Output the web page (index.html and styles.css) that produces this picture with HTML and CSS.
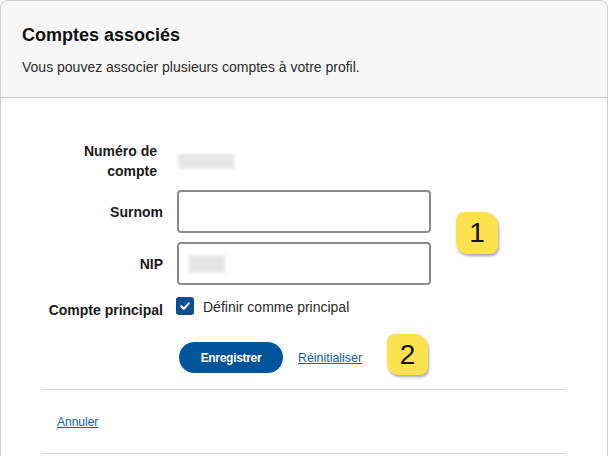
FILE: index.html
```html
<!DOCTYPE html>
<html lang="fr">
<head>
<meta charset="utf-8">
<title>Comptes associés</title>
<link rel="stylesheet" href="styles.css">
</head>
<body>
<div class="card">
  <div class="card-header">
    <h1 class="title">Comptes associés</h1>
    <p class="subtitle">Vous pouvez associer plusieurs comptes à votre profil.</p>
  </div>
  <div class="card-body">
    <div class="form">
      <div class="label label-two">Numéro de<br>compte</div>
      <div class="value"><span class="blur blur-num"></span></div>

      <div class="label label-mid">Surnom</div>
      <div class="field"><div class="input"></div></div>

      <div class="label label-mid">NIP</div>
      <div class="field"><div class="input"><span class="blur blur-nip"></span></div></div>

      <div class="label label-check">Compte principal</div>
      <div class="check-row">
        <span class="checkbox">
          <svg width="12" height="12" viewBox="0 0 12 12"><path d="M2.2 6.3 L4.8 8.8 L9.8 3.4" fill="none" stroke="#fff" stroke-width="2" stroke-linecap="round" stroke-linejoin="round"/></svg>
        </span>
        <span class="check-text">Définir comme principal</span>
      </div>

      <div class="actions">
        <button class="btn-primary" type="button">Enregistrer</button>
        <a class="link link-reset" href="#">Réinitialiser</a>
      </div>
    </div>
    <hr class="rule">
    <div class="footer"><a class="link" href="#">Annuler</a></div>
    <hr class="rule">
    <span class="badge badge-1">1</span>
    <span class="badge badge-2">2</span>
  </div>
</div>
</body>
</html>
```
FILE: styles.css
```css
* { box-sizing: border-box; }
html, body { margin: 0; padding: 0; background: #fff; }
body {
  font-family: "Liberation Sans", Arial, sans-serif;
  color: #1a1a1a;
}
.card {
  width: 608px;
  height: 470px;
  border: 1px solid #cfcfcf;
  border-bottom: none;
  border-radius: 8px 8px 0 0;
  overflow: hidden;
}
.card-header {
  background: #f7f7f7;
  border-bottom: 1px solid #cfcfcf;
  padding: 24px 20px 21px 21px;
}
.title {
  margin: 0;
  font-size: 18px;
  line-height: 20px;
  font-weight: bold;
  color: #111;
}
.subtitle {
  margin: 13px 0 0;
  font-size: 14px;
  line-height: 18px;
  color: #2a2a2a;
}
.card-body {
  position: relative;
  padding: 43px 41px 0 42px;
}
.form {
  display: grid;
  grid-template-columns: 120px 254px;
  column-gap: 14px;
  row-gap: 9px;
  align-items: center;
}
.label {
  text-align: right;
  font-size: 14px;
  font-weight: bold;
  line-height: 20px;
  color: #1a1a1a;
}
.label-two { padding-right: 6px; }
.value { height: 40px; display: flex; align-items: center; }
.blur {
  display: block;
  background: #e6e6e6;
  filter: blur(1.5px);
}
.blur-num { width: 56px; height: 15px; margin-left: 1px; }
.input {
  height: 43px;
  border: 2px solid #8c8c8c;
  border-radius: 4px;
  background: #fff;
  display: flex;
  align-items: center;
  padding-left: 10px;
}
.blur-nip { width: 36px; height: 18px; }
.field + .label { margin-top: 1px; }
.label-check {
  align-self: start;
  padding-top: 5px;
  margin-top: 1px;
}
.check-row {
  display: flex;
  align-items: center;
  gap: 9px;
  margin-top: 3px;
  height: 20px;
  align-self: start;
}
.checkbox {
  width: 18px;
  height: 18px;
  border-radius: 3px;
  background: #0d4f8f;
  display: flex;
  align-items: center;
  justify-content: center;
  margin-left: -1px;
  margin-top: -2px;
}
.check-text {
  font-size: 14px;
  color: #2a2a2a;
  margin-top: -1px;
}
.actions {
  grid-column: 2;
  display: flex;
  align-items: center;
  gap: 15px;
  margin-top: 13px;
  margin-left: 2px;
}
.btn-primary {
  width: 104px;
  height: 31px;
  border: none;
  border-radius: 16px;
  background: #00549a;
  color: #fff;
  font-family: "Liberation Sans", Arial, sans-serif;
  font-size: 12px;
  letter-spacing: -0.3px;
  font-weight: bold;
  padding: 0;
}
.link {
  color: #0b5ea8;
  font-size: 12px;
  text-decoration: underline;
}
.link-reset { font-size: 12.4px; }
.rule {
  border: none;
  border-top: 1px solid #dcdcdc;
  margin: 0;
}
.form + .rule { margin-top: 16px; }
.footer {
  padding: 0 14px;
  height: 63px;
  display: flex;
  align-items: center;
}
.badge {
  position: absolute;
  width: 42px;
  height: 42px;
  background: #fde24f;
  border-radius: 8px 14px 8px 12px;
  box-shadow: 1px 2px 3px rgba(0, 0, 0, 0.35);
  font-size: 28px;
  line-height: 42px;
  text-align: center;
  color: #111;
}
.badge-1 { left: 455px; top: 114px; }
.badge-2 { left: 386px; top: 236px; width: 41px; height: 41px; line-height: 41px; }
```
